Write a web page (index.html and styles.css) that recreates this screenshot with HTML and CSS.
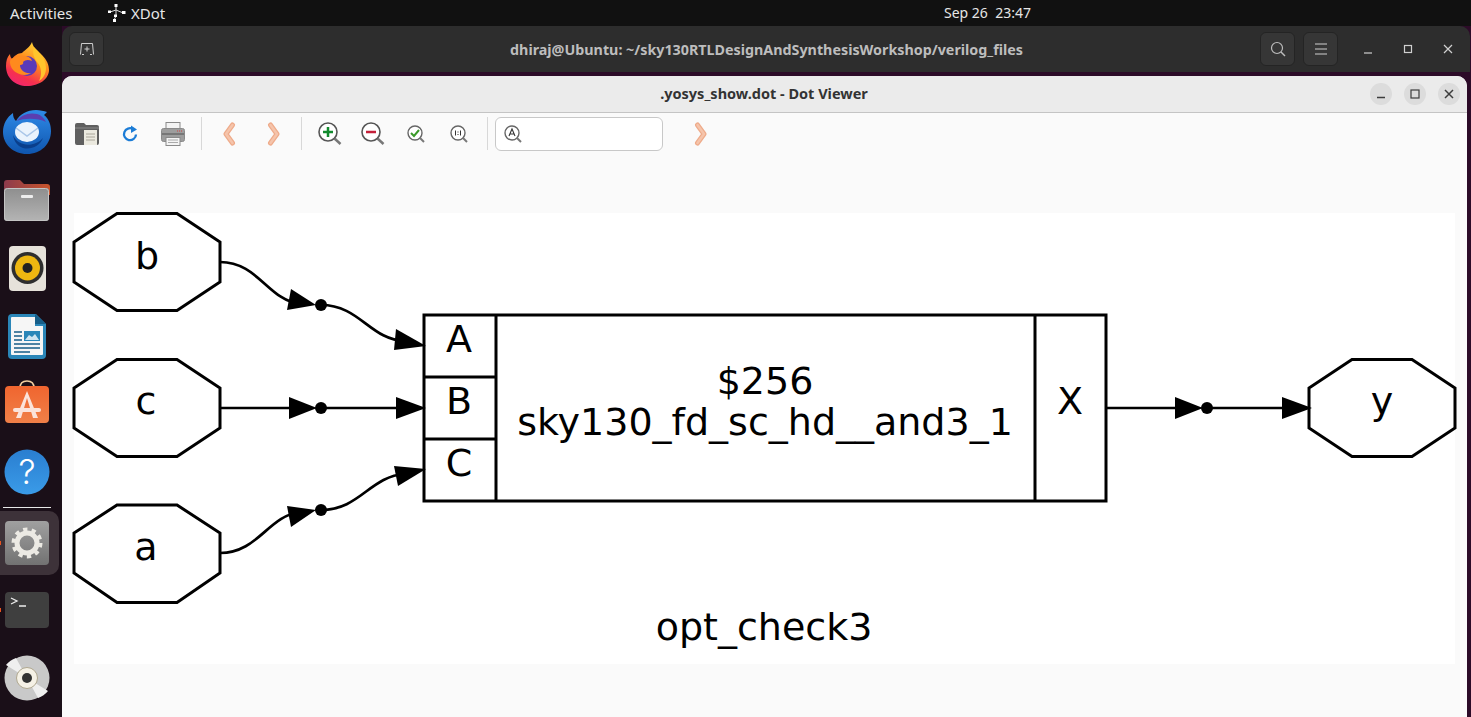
FILE: index.html
```html
<!DOCTYPE html>
<html lang="en">
<head>
<meta charset="utf-8">
<title>.yosys_show.dot - Dot Viewer</title>
<link rel="stylesheet" href="styles.css">
</head>
<body>
<header class="topbar">
  <span class="activities">Activities</span>
  <span class="appmenu">
    <svg class="xdot-glyph" viewBox="0 0 18 18" width="18" height="18"><path d="M8 1v5M8 6l-6 2M8 6l6 2.500M8 6v6M8 12l-2 4" fill="none" stroke="#ddd" stroke-width="1"/><rect x="6.500" y="0" width="3" height="3" fill="#fff"/><rect x="0" y="6.500" width="3" height="2.500" fill="#fff"/><rect x="14" y="7" width="3.500" height="3" fill="#fff"/><rect x="6" y="10.500" width="3" height="2.500" fill="#fff"/><rect x="5" y="15" width="3" height="3" fill="#fff"/></svg>
    XDot
  </span>
  <span class="clock">Sep 26&nbsp; 23:47</span>
</header>

<div class="screen">
  <nav class="dock">
    <div class="dock-item">
      <svg viewBox="0 0 44 44" width="44" height="44"><defs><linearGradient id="ffa" x1="0.800" y1="0" x2="0.300" y2="1"><stop offset="0" stop-color="#ffe03a"/><stop offset="0.450" stop-color="#ff8a1e"/><stop offset="0.800" stop-color="#f6304f"/><stop offset="1" stop-color="#f0266e"/></linearGradient></defs><path d="M27 0c1 6 6 9 10 13 5 5 7 10 7 15 0 9-10 16-22 16C10 44 1 36 1 24c0-5 1-9 4-12 0 2 1 4 2 5 2-3 6-6 10-6 3-3 8-6 10-11z" fill="url(#ffa)"/><path d="M29 5c5 5 12 11 12 21 0 6-3 11-7 13 3-6 3-14-2-19-3-4-5-9-3-15z" fill="#ffc52c"/><circle cx="22" cy="24" r="10" fill="#5a3ab8"/><path d="M6 17c4-3 10-4 15-3 3 1 5 2 6 5-4-2-7-1-9 1 1 2-1 3-3 3 0 5 5 9 11 8-7 5-20 0-21-10 0-2 0-3 1-4z" fill="#ff8a1e"/></svg>
    </div>
    <div class="dock-item">
      <svg viewBox="0 0 48 46" width="48" height="46"><defs><linearGradient id="tb" x1="0" y1="0" x2="0" y2="1"><stop offset="0" stop-color="#2f8be8"/><stop offset="1" stop-color="#0f55ae"/></linearGradient></defs><path d="M10 4c0 4 1 6 3 8 4-7 11-11 20-11 4 0 8 1 11 2l-3 3c5 4 7 10 7 16 0 13-10 23-24 23S0 35 0 23c0-8 4-15 10-19z" fill="url(#tb)"/><path d="M14 12c4-6 12-9 20-7 4 1 7 4 9 8-8-4-22-4-29-1z" fill="#5b3fb0"/><ellipse cx="24" cy="23" rx="12" ry="10" fill="#eaf3fc"/><path d="M13 19l11 8 11-8" fill="none" stroke="#a9c6e8" stroke-width="1.500"/><path d="M10 26c4 9 14 12 23 8 3-1 5-3 7-5-3 8-12 12-20 10-6-2-9-7-10-13z" fill="#0a3f8c"/></svg>
    </div>
    <div class="dock-item">
      <svg viewBox="0 0 46 42" width="46" height="42"><defs><linearGradient id="fo" x1="0" y1="0" x2="1" y2="0"><stop offset="0" stop-color="#8c3a4c"/><stop offset="1" stop-color="#c9552c"/></linearGradient><linearGradient id="fg" x1="0" y1="0" x2="0" y2="1"><stop offset="0" stop-color="#8e8e8e"/><stop offset="1" stop-color="#b4b4b4"/></linearGradient></defs><path d="M0 4q0-3 3-3h13l4 4h23q3 0 3 3v8H0z" fill="url(#fo)"/><rect x="0" y="9" width="45" height="33" rx="3" fill="url(#fg)"/><rect x="0.500" y="9.500" width="44" height="32" rx="3" fill="none" stroke="#c4c4c4"/><rect x="17" y="16" width="12" height="3" rx="1" fill="#eee"/></svg>
    </div>
    <div class="dock-item">
      <svg viewBox="0 0 37 45" width="37" height="45"><rect width="37" height="45" rx="4" fill="#e6e2da"/><circle cx="18.500" cy="22" r="16" fill="#2e2e2e"/><circle cx="18.500" cy="22" r="12.500" fill="#eeb711"/><circle cx="18.500" cy="22" r="5" fill="#222"/></svg>
    </div>
    <div class="dock-item">
      <svg viewBox="0 0 38 45" width="38" height="45"><path d="M4 0h24l10 10v31q0 4-4 4H4q-4 0-4-4V4q0-4 4-4z" fill="#2a86b8"/><path d="M4 3h23v9h8v28q0 1-1 1H4q-1 0-1-1V4q0-1 1-1z" fill="#f6f6f6"/><path d="M27 0l11 10-11 0z" fill="#175e88"/><rect x="16" y="17" width="16" height="10" fill="#2a86b8"/><path d="M17 26l4-5 3 2 3-3 4 6z" fill="#cfe4f0"/><path d="M6 18h8M6 22h8M6 26h8M6 30h26M6 34h26M6 38h16" stroke="#175e88" stroke-width="1.700"/></svg>
    </div>
    <div class="dock-item">
      <svg class="bag" viewBox="0 0 44 43" width="44" height="43"><defs><linearGradient id="as" x1="0" y1="0" x2="0" y2="1"><stop offset="0" stop-color="#f0652f"/><stop offset="1" stop-color="#f08048"/></linearGradient></defs><path d="M15 8q0-7 7-7t7 7" fill="none" stroke="#f2cfa0" stroke-width="1.700"/><rect y="6" width="44" height="37" rx="4" fill="url(#as)"/><path d="M22 11l-11 27h5l6-20 6 20h5z" fill="#fbe3da"/><rect x="8" y="28" width="28" height="4" rx="2" fill="#fbe3da"/></svg>
    </div>
    <div class="dock-item">
      <svg viewBox="0 0 46 46" width="46" height="46"><defs><linearGradient id="hp" x1="0" y1="0" x2="0" y2="1"><stop offset="0" stop-color="#2a7ed0"/><stop offset="1" stop-color="#3a9be8"/></linearGradient></defs><circle cx="23" cy="23" r="22.500" fill="url(#hp)"/><text x="23" y="35" class="help-mark">?</text></svg>
    </div>
    <div class="dock-sep"></div>
    <div class="dock-item dock-item-active">
      <span class="running-dot"></span>
      <svg viewBox="0 0 44 44" width="44" height="44"><defs><linearGradient id="st" x1="0" y1="0" x2="0" y2="1"><stop offset="0" stop-color="#a0a0a0"/><stop offset="1" stop-color="#727272"/></linearGradient></defs><rect width="44" height="44" rx="4" fill="url(#st)"/><circle cx="22" cy="22" r="13.500" fill="none" stroke="#eceae4" stroke-width="4" stroke-dasharray="4.240 4.240"/><circle cx="22" cy="22" r="10" fill="none" stroke="#eceae4" stroke-width="5"/></svg>
    </div>
    <div class="dock-item">
      <span class="running-dot"></span>
      <svg viewBox="0 0 44 36" width="44" height="36"><rect width="44" height="36" rx="4" fill="#3f3f3f"/><path d="M6 6l6 3-6 3" fill="none" stroke="#eee" stroke-width="1.300"/><path d="M14 14h7" stroke="#eee" stroke-width="1.500"/></svg>
    </div>
    <div class="dock-item">
      <svg viewBox="0 0 46 46" width="46" height="46"><circle cx="23" cy="23" r="22.500" fill="#c9c9c9"/><path d="M23 23L2 10A22 22 0 0 1 12 3zM23 23l21 13a22 22 0 0 1-10 7z" fill="#efefef"/><circle cx="23" cy="23" r="10.500" fill="#f5f1e6" stroke="#b0a890"/><circle cx="23" cy="23" r="5" fill="#333"/></svg>
    </div>
  </nav>

  <main class="desktop">
    <section class="window terminal">
      <button class="hb-btn hb-new"><svg viewBox="0 0 16 16" width="16" height="16"><path d="M1.500 13.500l1-11h11l1 11M5 13.500H3M13 13.500h-2M8 5.500v5M5.500 8h5" fill="none" stroke="#cfcfcf" stroke-width="1"/></svg></button>
      <h1 class="terminal-title">dhiraj@Ubuntu: ~/sky130RTLDesignAndSynthesisWorkshop/verilog_files</h1>
      <button class="hb-btn"><svg viewBox="0 0 16 16" width="16" height="16"><circle cx="7" cy="7" r="5.500" fill="none" stroke="#bdbdbd" stroke-width="1.200"/><path d="M11 11l4 4" stroke="#bdbdbd" stroke-width="1.400"/></svg></button>
      <button class="hb-btn"><svg viewBox="0 0 16 16" width="16" height="16"><path d="M1 3h12M1 8h12M1 13h12" transform="translate(1 0)" stroke="#cfcfcf" stroke-width="1"/></svg></button>
      <div class="term-controls">
        <svg viewBox="0 0 10 10" width="10" height="10"><path d="M1 9h8" stroke="#d0d0d0" stroke-width="1.200"/></svg>
        <svg viewBox="0 0 10 10" width="10" height="10"><rect x="1.500" y="1.500" width="7" height="7" fill="none" stroke="#d0d0d0" stroke-width="1.200"/></svg>
        <svg viewBox="0 0 10 10" width="10" height="10"><path d="M1 1l8 8M9 1l-8 8" stroke="#d0d0d0" stroke-width="1.200"/></svg>
      </div>
    </section>

    <section class="window viewer">
      <div class="viewer-head">
        <h2 class="viewer-title">.yosys_show.dot - Dot Viewer</h2>
        <div class="viewer-controls">
          <span class="circle-btn"><svg viewBox="0 0 10 10" width="10" height="10"><path d="M1 8.500h8" stroke="#3d3d3d" stroke-width="1.300"/></svg></span>
          <span class="circle-btn"><svg viewBox="0 0 10 10" width="10" height="10"><rect x="1" y="1" width="8" height="8" fill="none" stroke="#3d3d3d" stroke-width="1.200"/></svg></span>
          <span class="circle-btn"><svg viewBox="0 0 10 10" width="10" height="10"><path d="M1 1l8 8M9 1l-8 8" stroke="#3d3d3d" stroke-width="1.500"/></svg></span>
        </div>
      </div>

      <div class="toolbar">
        <span class="tool"><svg viewBox="0 0 24 24" width="24" height="24"><path d="M0 3q0-2 2-2h7l2 2h11q2 0 2 2v16q0 2-2 2H2q-2 0-2-2z" fill="#5f5f5f"/><path d="M0 6h24" stroke="#8a8a8a"/><rect x="9" y="8" width="13" height="15" fill="#ebe9df"/><path d="M11 12h9M11 15h9M11 18h9" stroke="#aaa69a"/></svg></span>
        <span class="tool"><svg viewBox="0 0 18 18" width="18" height="18"><path d="M15 9.500A6 6 0 1 1 12 4" fill="none" stroke="#1c7cd6" stroke-width="2.300"/><path d="M10 0.500l6 4-6 3.500z" fill="#1c7cd6"/></svg></span>
        <span class="tool"><svg viewBox="0 0 24 24" width="24" height="24"><rect x="5" y="0.500" width="14" height="8" fill="#f4f4f4" stroke="#8a8a8a"/><rect x="0.500" y="6.500" width="23" height="13" rx="2" fill="#9d9d9d" stroke="#8a8a8a"/><rect x="1" y="11" width="22" height="2" fill="#777"/><rect x="5" y="15.500" width="14" height="8" fill="#f4f4f4" stroke="#8a8a8a"/><path d="M7 18h10M7 20.500h10" stroke="#aaa"/><path d="M16 9h1M18 9h1M20 9h1" stroke="#c44"/></svg></span>
        <span class="tool-sep"></span>
        <span class="tool tool-nav"><svg viewBox="0 0 14 24" width="14" height="24"><g class="chev"><path class="chev-o" d="M10.500 3L4 12l6.500 9"/><path class="chev-i" d="M10.500 3L4 12l6.500 9"/></g></svg></span>
        <span class="tool tool-nav"><svg viewBox="0 0 14 24" width="14" height="24"><g class="chev"><path class="chev-o" d="M3.500 3L10 12 3.500 21"/><path class="chev-i" d="M3.500 3L10 12 3.500 21"/></g></svg></span>
        <span class="tool-sep tool-sep-b"></span>
        <span class="tool"><svg viewBox="0 0 24 24" width="24" height="24"><circle cx="10" cy="10" r="9" fill="#fff" stroke="#555" stroke-width="1.600"/><path d="M16.500 16.500l6 5.500" stroke="#777" stroke-width="2.500"/><path d="M5 10h10M10 5v10" stroke="#128a2e" stroke-width="2.500"/></svg></span>
        <span class="tool"><svg viewBox="0 0 24 24" width="24" height="24"><circle cx="10" cy="10" r="9" fill="#fff" stroke="#555" stroke-width="1.600"/><path d="M16.500 16.500l6 5.500" stroke="#777" stroke-width="2.500"/><path d="M5 10h10" stroke="#c4203a" stroke-width="2.500"/></svg></span>
        <span class="tool"><svg viewBox="0 0 18 18" width="18" height="18"><circle cx="8" cy="8" r="7" fill="#fff" stroke="#666" stroke-width="1.400"/><path d="M13 13l4 4" stroke="#777" stroke-width="2"/><path d="M4 8l3 3 5-6" fill="none" stroke="#3a9a2a" stroke-width="2"/></svg></span>
        <span class="tool"><svg viewBox="0 0 18 18" width="18" height="18"><circle cx="8" cy="8" r="7" fill="#fff" stroke="#666" stroke-width="1.400"/><path d="M13 13l4 4" stroke="#777" stroke-width="2"/><path d="M5.500 5.500v5M10.500 5.500v5M8 6.500v1M8 9v1" stroke="#333" stroke-width="1"/></svg></span>
        <span class="tool-sep tool-sep-c"></span>
        <label class="search">
          <svg viewBox="0 0 18 18" width="18" height="18"><circle cx="8" cy="8" r="7" fill="#fff" stroke="#666" stroke-width="1.400"/><path d="M13 13l4 4" stroke="#777" stroke-width="2"/><path d="M5 11l3-7 3 7M6 9h4" fill="none" stroke="#333" stroke-width="1.100"/></svg>
        </label>
        <span class="tool tool-find"><svg viewBox="0 0 14 24" width="14" height="24"><g class="chev"><path class="chev-o" d="M3.500 3L10 12 3.500 21"/><path class="chev-i" d="M3.500 3L10 12 3.500 21"/></g></svg></span>
      </div>

      <div class="canvas-wrap">
        <svg class="graph" viewBox="74 213 1381 451" width="1381" height="451">
          <g class="shape">
            <polygon points="117,213.500 177,213.500 220,242 220,282 177,310.500 117,310.500 74,282 74,242"/>
            <polygon points="117,359.500 177,359.500 220,388 220,428 177,456.500 117,456.500 74,428 74,388"/>
            <polygon points="117,505 177,505 220,533 220,573 177,602.500 117,602.500 74,573 74,533"/>
            <polygon points="1352,359.500 1412,359.500 1455,388 1455,428 1412,456.500 1352,456.500 1309,428 1309,388"/>
            <rect x="424" y="315" width="682" height="186"/>
            <path d="M496 315V501M1035 315V501M424 377H496M424 439H496"/>
          </g>
          <g class="edge">
            <path d="M220 262C258 262 268 300 300 304"/>
            <path d="M321 305C360 305 370 340 405 341"/>
            <path d="M220 408H292M321 408H398"/>
            <path d="M220 553C258 553 268 516 300 512"/>
            <path d="M321 510C360 510 370 476 405 474"/>
            <path d="M1106 408H1178M1207 408H1284"/>
          </g>
          <g class="head">
            <polygon points="291,289 316,305 287,310"/>
            <polygon points="396,329 426,346 394,350"/>
            <polygon points="289,397 317,408 289,419"/>
            <polygon points="396,397 426,408 396,419"/>
            <polygon points="287,506 316,510 291,527"/>
            <polygon points="394,466 426,469 398,486"/>
            <polygon points="1175,397 1203,408 1175,419"/>
            <polygon points="1282,397 1312,408 1282,419"/>
            <circle cx="321" cy="305" r="6"/>
            <circle cx="321" cy="408" r="6"/>
            <circle cx="321" cy="510" r="6"/>
            <circle cx="1207" cy="408" r="6"/>
          </g>
          <g class="labels">
            <text x="147" y="269">b</text>
            <text x="146" y="414">c</text>
            <text x="146" y="560">a</text>
            <text x="1382" y="414">y</text>
            <text x="459" y="352">A</text>
            <text x="459" y="414">B</text>
            <text x="459" y="476">C</text>
            <text x="765" y="394">$256</text>
            <text x="765" y="435">sky130_fd_sc_hd__and3_1</text>
            <text x="1070" y="414">X</text>
            <text x="764" y="640">opt_check3</text>
          </g>
        </svg>
      </div>
    </section>
  </main>
</div>
</body>
</html>
```

FILE: styles.css
```css
* { box-sizing: border-box; }
html, body { margin: 0; height: 100%; overflow: hidden; }
body {
  display: flex;
  flex-direction: column;
  background: #2c0b28;
  font-family: "Noto Sans", "Open Sans", sans-serif;
}

/* top bar */
.topbar {
  position: relative;
  flex: 0 0 26px;
  display: flex;
  align-items: center;
  padding-left: 10px;
  background: #111111;
  color: #e6e6e6;
  font-size: 15px;
}
.activities { width: 98px; }
.appmenu { display: flex; align-items: center; gap: 5px; }
.clock { position: absolute; left: 944px; top: 3px; font-size: 14px; }

.screen { flex: 1; display: flex; min-height: 0; }

/* dock */
.dock {
  flex: 0 0 62px;
  padding: 4px 8px 0 0;
  background: #1a0f18;
  display: flex;
  flex-direction: column;
}
.dock-item {
  position: relative;
  flex: 0 0 68px;
  display: flex;
  align-items: center;
  justify-content: center;
}
.bag { margin-bottom: 5px; }
.dock-item-active {
  margin-bottom: -1px;
}
.dock-item-active::before {
  content: "";
  position: absolute;
  left: 0;
  top: 2px;
  bottom: 2px;
  width: 59px;
  border-radius: 0 10px 10px 0;
  background: #3d3239;
}
.dock-item svg { position: relative; }
.dock-sep { flex: 0 0 1px; margin: 1px 3px 1px 3px; background: #e8e8e8; }
.running-dot {
  position: absolute;
  left: 0;
  top: 32px;
  width: 1px;
  height: 4px;
  background: #e95420;
  z-index: 1;
}
.help-mark {
  font-family: "Inter", sans-serif;
  font-size: 34px;
  font-weight: 300;
  text-anchor: middle;
  fill: #fff;
}

/* desktop windows */
.desktop { position: relative; flex: 1; }
.window { position: absolute; }

.terminal {
  left: 0;
  top: 0;
  width: 1408px;
  height: 46px;
  display: flex;
  align-items: center;
  padding: 0 0 0 7px;
  gap: 8px;
  background: #2d2d2d;
  border-radius: 10px 10px 0 0;
}
.hb-btn {
  width: 35px;
  height: 34px;
  padding: 0;
  display: flex;
  align-items: center;
  justify-content: center;
  background: #363636;
  border: 1px solid #242424;
  border-radius: 6px;
}
.terminal-title {
  flex: 1;
  margin: 0;
  padding-left: 169px;
  text-align: center;
  color: #bdbdbd;
  font-size: 14.3px;
  font-weight: 700;
}
.term-controls {
  flex: 0 0 124px;
  display: flex;
  justify-content: space-between;
  padding: 0 17px;
}

.viewer {
  left: 0;
  top: 50px;
  right: 4px;
  bottom: 0;
  display: flex;
  flex-direction: column;
  background: #fafafa;
  border-radius: 10px 10px 0 0;
  overflow: hidden;
}
.viewer-head {
  flex: 0 0 37px;
  position: relative;
  display: flex;
  align-items: center;
  justify-content: center;
  background: #ebebeb;
  border-bottom: 1px solid #c4c4c4;
}
.viewer-title {
  margin: 0 1px 2px 0;
  color: #333333;
  font-size: 14.5px;
  font-weight: 700;
}
.viewer-controls {
  position: absolute;
  right: 7px;
  top: 7px;
  display: flex;
  gap: 12px;
}
.circle-btn {
  width: 22px;
  height: 22px;
  display: flex;
  align-items: center;
  justify-content: center;
  background: #dcdcdc;
  border-radius: 50%;
}

/* toolbar */
.toolbar {
  flex: 0 0 42px;
  display: flex;
  align-items: center;
  padding-left: 3px;
}
.tool {
  flex: 0 0 43px;
  display: flex;
  align-items: center;
  justify-content: center;
}
.tool-sep {
  flex: 0 0 1px;
  align-self: stretch;
  margin: 4px 4px 5px 7px;
  background: #d8d8d8;
}
.tool-nav { flex-basis: 45px; }
.tool-sep-b { margin-left: 5px; margin-right: 6px; }
.tool-sep-c { margin-left: 7px; margin-right: 7px; }
.search {
  flex: 0 0 168px;
  height: 34px;
  display: flex;
  align-items: center;
  padding-left: 8px;
  background: #ffffff;
  border: 1px solid #c8c8c8;
  border-radius: 6px;
}
.tool-find { margin-left: 16px; }
.chev { fill: none; stroke-linejoin: round; stroke-linecap: round; }
.chev-o { stroke: #eeab8a; stroke-width: 5; }
.chev-i { stroke: #f5c4ab; stroke-width: 2.500; }

/* graph */
.canvas-wrap { flex: 1; padding: 58px 0 0 12px; }
.graph { display: block; background: #ffffff; overflow: visible; }
.shape { fill: none; stroke: #000; stroke-width: 3; }
.edge { fill: none; stroke: #000; stroke-width: 2.700; }
.head { fill: #000; }
.labels {
  font-family: "DejaVu Sans", sans-serif;
  font-size: 38px;
  text-anchor: middle;
  fill: #000;
}
```
